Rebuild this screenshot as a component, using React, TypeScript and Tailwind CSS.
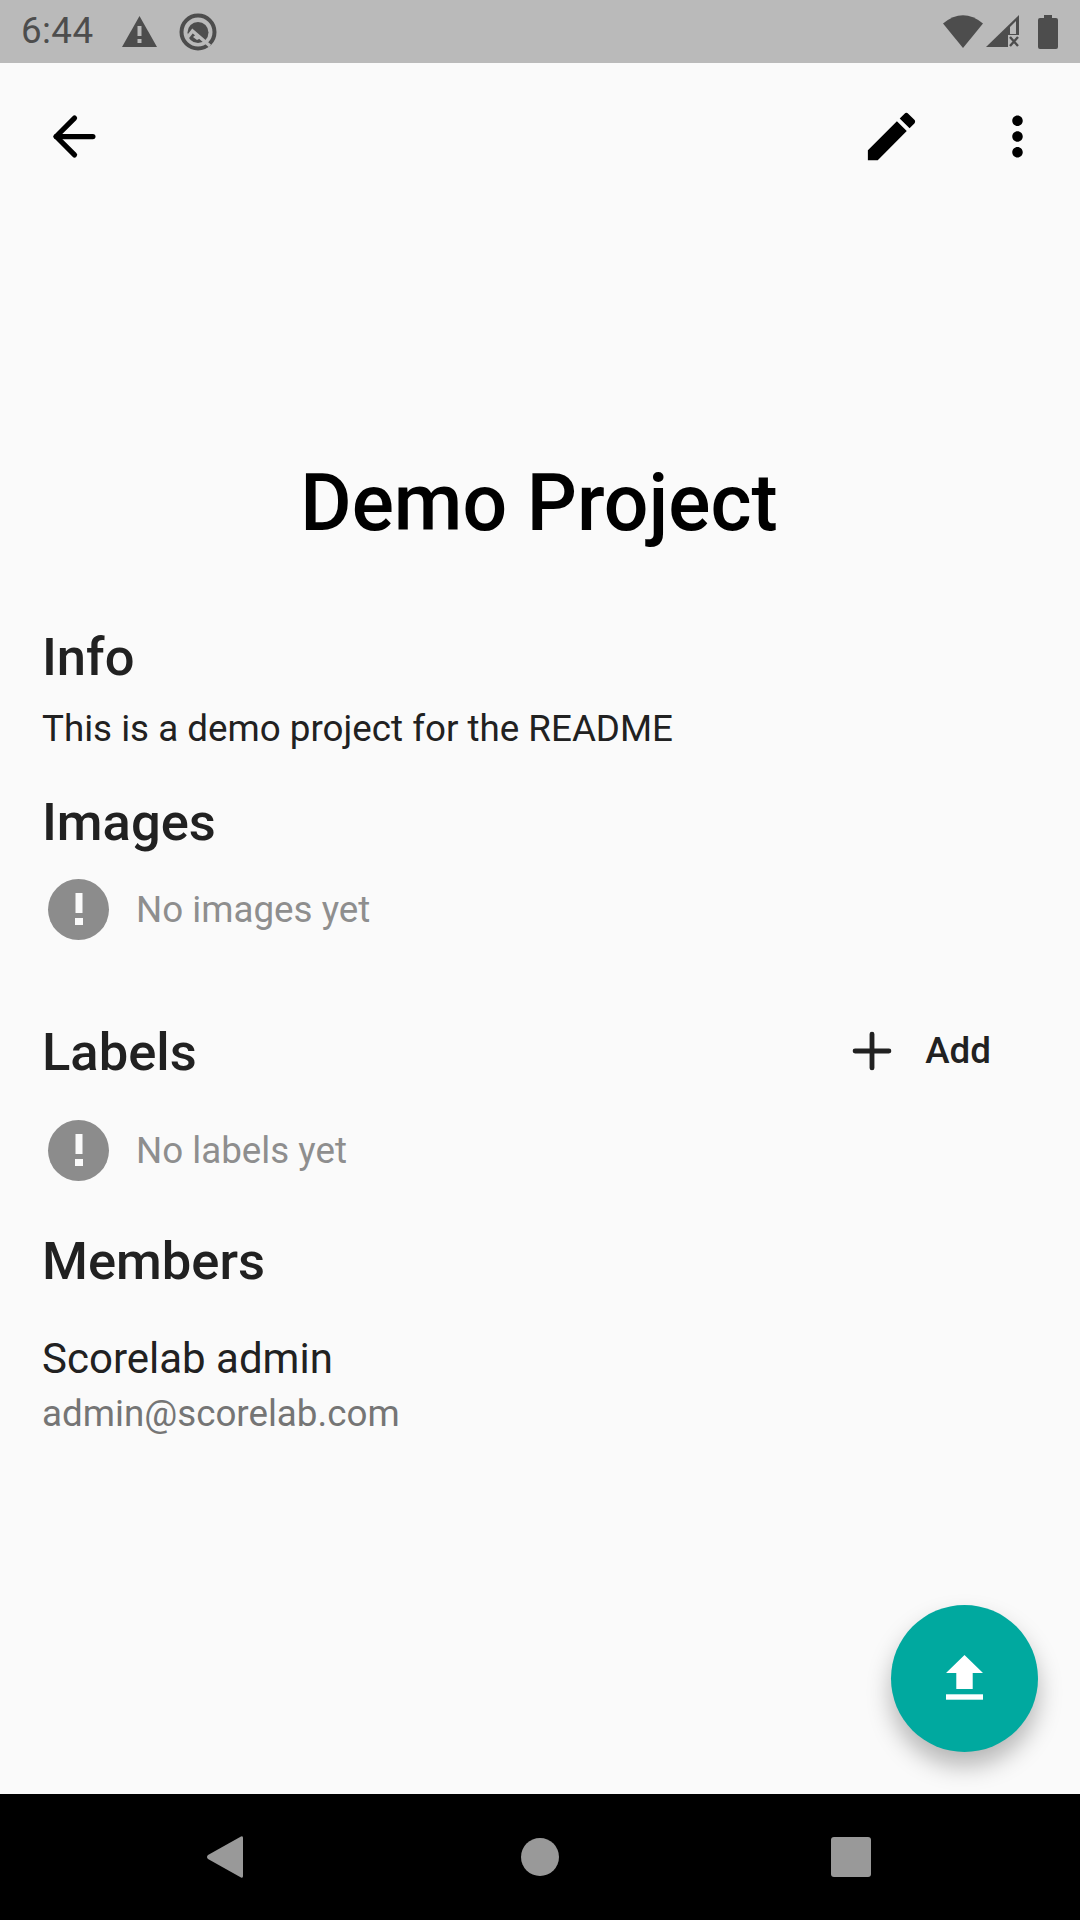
import React from "react";
import { ArrowLeft, Plus } from "lucide-react";

const roboto = "font-['Roboto',sans-serif]";

function StatusBar() {
  return (
    <div className="h-[63px] bg-[#bababa] flex items-center justify-between pl-[21px] pr-[22px] text-[#4d4d4d] shrink-0">
      <div className="flex items-center">
        <span className="text-[36.75px] leading-none tracking-[0.4px]">6:44</span>
        <svg className="ml-[29px]" width="35" height="32" viewBox="0 0 35 32">
          <path d="M17.5 0 L35 31 H0 Z" fill="#4d4d4d" />
          <rect x="15.5" y="10" width="4" height="10" fill="#bababa" />
          <rect x="15.5" y="23" width="4" height="4" fill="#bababa" />
        </svg>
        <svg className="ml-[22px]" width="38" height="38" viewBox="0 0 38 38" fill="none">
          <circle cx="19" cy="19" r="16.5" stroke="#4d4d4d" strokeWidth="4" />
          <circle cx="19" cy="19.5" r="10.5" fill="#4d4d4d" />
          <path d="M8 25 L13.5 18 L31 33" stroke="#bababa" strokeWidth="3.4" />
          <path d="M14 24 L17 21.5 L21 25.5 L18 27 Z" fill="#bababa" />
        </svg>
      </div>
      <div className="flex items-center">
        <svg width="40" height="33" viewBox="0 0 40 33">
          <path d="M0 8.5 Q20 -8 40 8.5 L20 33 Z" fill="#4d4d4d" />
        </svg>
        <svg className="ml-[3px]" width="34" height="33" viewBox="0 0 34 33">
          <path d="M33 0 V32 H0 Z" fill="#4d4d4d" />
          <path d="M24 19 V12 L30 6 V19 Z" fill="#bababa" />
          <rect x="22" y="20" width="12" height="13" fill="#bababa" />
          <path d="M24 22 L32 31 M32 22 L24 31" stroke="#4d4d4d" strokeWidth="2.4" />
        </svg>
        <svg className="ml-[18px]" width="20" height="34" viewBox="0 0 20 34">
          <path d="M6 0 H14 V3 H18 Q20 3 20 5 V32 Q20 34 18 34 H2 Q0 34 0 32 V5 Q0 3 2 3 H6 Z" fill="#4d4d4d" />
        </svg>
      </div>
    </div>
  );
}

function AppBar() {
  return (
    <div className="h-[147px] flex items-center justify-between shrink-0 text-black">
      <ArrowLeft className="ml-[43px]" size={63} strokeWidth={2} />
      <div className="flex items-center">
        <svg width="63" height="63" viewBox="0 0 24 24" fill="black">
          <path d="M3 17.25V21h3.75L17.81 9.94l-3.75-3.75L3 17.25zM20.71 7.04c.39-.39.39-1.02 0-1.41l-2.34-2.34c-.39-.39-1.02-.39-1.41 0l-1.83 1.83 3.75 3.75 1.83-1.83z" />
        </svg>
        <svg className="ml-[63px] mr-[31px]" width="63" height="63" viewBox="0 0 24 24" fill="black">
          <path d="M12 8c1.1 0 2-.9 2-2s-.9-2-2-2-2 .9-2 2 .9 2 2 2zm0 2c-1.1 0-2 .9-2 2s.9 2 2 2 2-.9 2-2-.9-2-2-2zm0 6c-1.1 0-2 .9-2 2s.9 2 2 2 2-.9 2-2-.9-2-2-2z" />
        </svg>
      </div>
    </div>
  );
}

function Empty({ text }: { text: string }) {
  return (
    <div className="flex items-center h-[63px] pl-[6px]">
      <div className="w-[61px] h-[61px] rounded-full bg-[#8c8c8c] flex items-center justify-center">
        <svg width="8" height="32" viewBox="0 0 8 32" fill="#fafafa">
          <rect x="0.5" width="7" height="20" />
          <rect x="0" y="25" width="8" height="7" />
        </svg>
      </div>
      <span className="ml-[27px] pt-[2px] text-[36.75px] leading-none text-[#8e8e8e]">{text}</span>
    </div>
  );
}

function Heading({ children }: { children: React.ReactNode }) {
  return <h2 className="text-[52.5px] leading-none font-medium text-[#212121]">{children}</h2>;
}

export default function App() {
  return (
    <div className={`w-[1080px] h-[1920px] flex flex-col overflow-hidden bg-[#fafafa] ${roboto}`}>
      <StatusBar />
      <AppBar />
      <div className="relative flex-1 flex flex-col px-[42px]">
        <h1 className="mt-[254px] pr-[2px] text-center text-[78.75px] leading-none font-medium text-black">Demo Project</h1>
        <div className="mt-[88px]">
          <Heading>Info</Heading>
        </div>
        <p className="mt-[28px] text-[36.75px] leading-none text-[#212121]">This is a demo project for the README</p>
        <div className="mt-[48px]">
          <Heading>Images</Heading>
        </div>
        <div className="mt-[29px]">
          <Empty text="No images yet" />
        </div>
        <div className="mt-[83px] flex items-center justify-between">
          <Heading>Labels</Heading>
          <div className="flex items-center mr-[47px] -translate-y-[2px] text-[#212121]">
            <Plus size={58} strokeWidth={2} />
            <span className="ml-[24px] pt-[2px] text-[36.75px] leading-none font-medium">Add</span>
          </div>
        </div>
        <div className="mt-[37px]">
          <Empty text="No labels yet" />
        </div>
        <div className="mt-[53px]">
          <Heading>Members</Heading>
        </div>
        <p className="mt-[51px] text-[42px] leading-none text-[#212121]">Scorelab admin</p>
        <p className="mt-[16px] text-[36.75px] leading-none text-[#757575]">admin@scorelab.com</p>
        <button className="absolute right-[42px] top-[1395px] w-[147px] h-[147px] rounded-full bg-[#00a99f] flex items-center justify-center pb-[3px] shadow-[0_14px_24px_rgba(0,0,0,0.28)]">
          <svg width="37" height="45" viewBox="0 0 37 45" fill="white">
            <path d="M18.5 0 L37 18 H26.7 V34 H10.3 V18 H0 Z" />
            <rect x="0" y="39.3" width="37" height="5.4" />
          </svg>
        </button>
      </div>
      <div className="h-[126px] bg-black shrink-0 flex items-center pl-[207px]">
        <svg width="36" height="42" viewBox="0 0 36 42" fill="#999999">
          <path d="M34 0.5 Q36 -0.5 36 2 V40 Q36 42.5 34 41.5 L1 23 Q-1 21 1 19 Z" />
        </svg>
        <div className="ml-[278px] w-[38px] h-[38px] rounded-full bg-[#999999]" />
        <div className="ml-[272px] w-[40px] h-[40px] rounded-[3px] bg-[#999999]" />
      </div>
    </div>
  );
}
